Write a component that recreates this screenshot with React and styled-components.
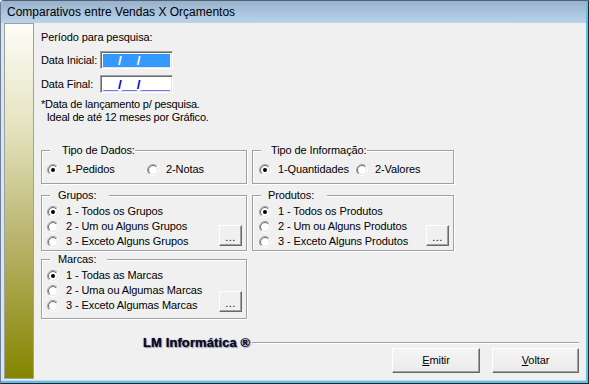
import React, { useId } from 'react';
import styled, { createGlobalStyle } from 'styled-components';

const GlobalStyle = createGlobalStyle`
  html, body {
    margin: 0;
    padding: 0;
    background: #fff;
  }
  body {
    font-family: "Liberation Sans", Arial, sans-serif;
  }
`;

const WindowSC = styled.div`
  width: 589px;
  height: 384px;
  box-sizing: border-box;
  border-top: 1px solid #55606c;
  border-left: 1px solid #6d7f95;
  border-right: 1px solid #262626;
  border-bottom: 1px solid #262626;
  border-top-left-radius: 4px;
  overflow: hidden;
`;

const FrameSC = styled.div`
  height: 100%;
  box-sizing: border-box;
  display: flex;
  flex-direction: column;
  border-right: 2px solid #55c3ea;
  border-bottom: 2px solid #55c3ea;
`;

const TitleBarSC = styled.div`
  height: 22px;
  flex-shrink: 0;
  padding-left: 6px;
  display: flex;
  align-items: center;
  background: linear-gradient(#98b2cd, #bbd3eb);
  font-size: 12px;
  color: #000;
`;

const ClientSC = styled.div`
  flex: 1;
  display: flex;
  border-left: 3px solid #d8e6f4;
  border-bottom: 1px solid #c2daf0;
  padding-bottom: 1px;
  background: #f0f0f0;
`;

const SidePanelSC = styled.div`
  width: 30px;
  box-sizing: border-box;
  border: 1px solid #a0a0a0;
  background: linear-gradient(#fdfdf8 0%, #e4e2bd 30%, #b9b56e 60%, #858500 100%);
`;

const ContentSC = styled.div`
  flex: 1;
  display: flex;
  flex-direction: column;
  padding: 8px 7px 0 7px;
  font-size: 11px;
  line-height: 13px;
  letter-spacing: -0.1px;
  color: #000;
`;

const TextLine = styled.div`
  height: 13px;
  white-space: pre;
`;

const FieldRow = styled.div`
  display: flex;
  align-items: center;
  margin-top: ${(p) => p.$mt}px;
`;

const FieldLabel = styled.div`
  width: 59px;
`;

const DateInput = styled.div`
  width: 73px;
  height: 18px;
  box-sizing: border-box;
  border-top: 1px solid #a0a0a0;
  border-left: 1px solid #a0a0a0;
  border-right: 1px solid #fff;
  border-bottom: 1px solid #fff;
  box-shadow: inset 1px 1px 0 #696969, inset -1px -1px 0 #e3e3e3;
  background: #fff;
  padding: 2px 2px 1px 2px;
  display: flex;
`;

const MaskText = styled.div`
  flex: 1;
  height: 13px;
  line-height: 13px;
  font-size: 13.5px;
  font-weight: bold;
  letter-spacing: 0;
  white-space: pre;
  overflow: hidden;
  background: ${(p) => (p.$selected ? '#3399ff' : 'transparent')};
  color: ${(p) => (p.$selected ? '#3399ff' : '#0000ee')};

  .sep {
    color: ${(p) => (p.$selected ? '#fff' : '#0000ee')};
  }
`;

const Note = styled.div`
  margin-top: 5px;
  letter-spacing: -0.2px;
`;

const GroupGrid = styled.div`
  display: grid;
  grid-template-columns: 206px 202px;
  column-gap: 5px;
  align-items: start;
  margin-top: 26px;
`;

const Group = styled.div`
  position: relative;
  box-sizing: border-box;
  height: ${(p) => p.$h}px;
  margin-top: ${(p) => p.$mt || 0}px;
  border: 1px solid #a0a0a0;
  box-shadow: inset 1px 1px 0 #fff, 1px 1px 0 #fff;
  display: flex;
  align-items: flex-end;
  padding: ${(p) => p.$pad};
`;

const Legend = styled.span`
  position: absolute;
  top: -7px;
  left: 8px;
  padding: 0 ${(p) => p.$pr}px 0 ${(p) => p.$pl}px;
  background: #f0f0f0;
  line-height: 13px;
`;

const RadioList = styled.div`
  flex: 1;
  align-self: flex-start;
  display: flex;
  flex-direction: ${(p) => (p.$row ? 'row' : 'column')};
`;

const RadioItem = styled.label`
  display: flex;
  align-items: center;
  height: 15px;
  width: ${(p) => (p.$w ? `${p.$w}px` : 'auto')};
  white-space: nowrap;

  svg {
    flex-shrink: 0;
    margin-right: 7px;
  }
`;

const DotsButton = styled.div`
  width: 23px;
  height: 21px;
  box-sizing: border-box;
  border-top: 1px solid #fff;
  border-left: 1px solid #fff;
  border-right: 1px solid #696969;
  border-bottom: 1px solid #696969;
  box-shadow: inset -1px -1px 0 #a0a0a0;
  background: #f0f0f0;
  display: flex;
  justify-content: center;
  align-items: flex-end;
  padding-bottom: 4px;
  font-size: 11px;
  line-height: 8px;
  letter-spacing: 0.5px;
`;

const BrandRow = styled.div`
  display: flex;
  align-items: center;
  height: 11px;
  margin-top: 18px;
  padding-left: 102px;
`;

const Brand = styled.div`
  font-size: 13px;
  font-weight: bold;
  line-height: 11px;
  letter-spacing: 0.1px;
  color: #0a0a26;
  text-shadow: 0 0 1px rgba(0, 0, 60, 0.7), 1px 1px 1px rgba(0, 0, 40, 0.35);
  white-space: nowrap;
`;

const Rule = styled.div`
  flex: 1;
  height: 0;
  margin-left: 2px;
  border-top: 1px solid #a0a0a0;
  border-bottom: 1px solid #fff;
`;

const ButtonRow = styled.div`
  display: flex;
  justify-content: flex-end;
  gap: 12px;
`;

const PushButton = styled.div`
  width: ${(p) => p.$w}px;
  height: 25px;
  box-sizing: border-box;
  border-top: 1px solid #fff;
  border-left: 1px solid #fff;
  border-right: 1px solid #696969;
  border-bottom: 1px solid #696969;
  box-shadow: inset -1px -1px 0 #a0a0a0;
  background: linear-gradient(#f4f4f4, #ebebeb);
  display: flex;
  align-items: center;
  justify-content: center;
  font-size: 11px;

  u {
    text-decoration: underline;
  }
`;

const Radio = ({ checked }) => {
  const id = useId().replace(/:/g, '');
  return (
    <svg width="12" height="12" viewBox="0 0 12 12">
      <defs>
        <linearGradient id={`o${id}`} x1="0" y1="0" x2="1" y2="1">
          <stop offset="0.5" stopColor="#a0a0a0" />
          <stop offset="0.5" stopColor="#ffffff" />
        </linearGradient>
        <linearGradient id={`i${id}`} x1="0" y1="0" x2="1" y2="1">
          <stop offset="0.5" stopColor="#696969" />
          <stop offset="0.5" stopColor="#e3e3e3" />
        </linearGradient>
      </defs>
      <circle cx="6" cy="6" r="5.5" fill="none" stroke={`url(#o${id})`} />
      <circle cx="6" cy="6" r="4.5" fill="#fff" stroke={`url(#i${id})`} />
      {checked && <circle cx="6" cy="6" r="2" fill="#000" />}
    </svg>
  );
};

const Mask = ({ selected }) => (
  <MaskText $selected={selected}>
    __<span className="sep">/</span>__<span className="sep">/</span>____
  </MaskText>
);

const Options = ({ items, row, widths }) => (
  <RadioList $row={row}>
    {items.map((t, i) => (
      <RadioItem key={t} $w={widths && widths[i]}>
        <Radio checked={i === 0} />
        {t}
      </RadioItem>
    ))}
  </RadioList>
);

const App = () => (
  <>
    <GlobalStyle />
    <WindowSC>
      <FrameSC>
        <TitleBarSC>Comparativos entre Vendas X Orçamentos</TitleBarSC>
        <ClientSC>
          <SidePanelSC />
          <ContentSC>
            <TextLine>Período para pesquisa:</TextLine>
            <FieldRow $mt={7}>
              <FieldLabel>Data Inicial:</FieldLabel>
              <DateInput>
                <Mask selected />
              </DateInput>
            </FieldRow>
            <FieldRow $mt={6}>
              <FieldLabel>Data Final:</FieldLabel>
              <DateInput>
                <Mask />
              </DateInput>
            </FieldRow>
            <Note>
              <TextLine>*Data de lançamento p/ pesquisa.</TextLine>
              <TextLine>  Ideal de até 12 meses por Gráfico.</TextLine>
            </Note>

            <GroupGrid>
              <Group $h={34} $pad="11px 4px 4px 5px">
                <Legend $pl={12} $pr={0}>Tipo de Dados:</Legend>
                <Options row items={['1-Pedidos', '2-Notas']} widths={[100]} />
              </Group>
              <Group $h={34} $pad="11px 4px 4px 6px">
                <Legend $pl={10} $pr={0}>Tipo de Informação:</Legend>
                <Options row items={['1-Quantidades', '2-Valores']} widths={[97]} />
              </Group>

              <Group $h={56} $mt={11} $pad="8px 4px 4px 5px">
                <Legend $pl={8} $pr={13}>Grupos:</Legend>
                <Options
                  items={['1 - Todos os Grupos', '2 - Um ou Alguns Grupos', '3 - Exceto Alguns Grupos']}
                />
                <DotsButton>...</DotsButton>
              </Group>
              <Group $h={56} $mt={11} $pad="8px 4px 4px 6px">
                <Legend $pl={7} $pr={13}>Produtos:</Legend>
                <Options
                  items={['1 - Todos os Produtos', '2 - Um ou Alguns Produtos', '3 - Exceto Alguns Produtos']}
                />
                <DotsButton>...</DotsButton>
              </Group>

              <Group $h={60} $mt={8} $pad="8px 4px 6px 5px">
                <Legend $pl={8} $pr={11}>Marcas:</Legend>
                <Options
                  items={['1 - Todas as Marcas', '2 - Uma ou Algumas Marcas', '3 - Exceto Algumas Marcas']}
                />
                <DotsButton>...</DotsButton>
              </Group>
            </GroupGrid>

            <BrandRow>
              <Brand>LM Informática ®</Brand>
              <Rule />
            </BrandRow>
            <ButtonRow>
              <PushButton $w={88}>
                <span><u>E</u>mitir</span>
              </PushButton>
              <PushButton $w={87}>
                <span><u>V</u>oltar</span>
              </PushButton>
            </ButtonRow>
          </ContentSC>
        </ClientSC>
      </FrameSC>
    </WindowSC>
  </>
);

export default App;
